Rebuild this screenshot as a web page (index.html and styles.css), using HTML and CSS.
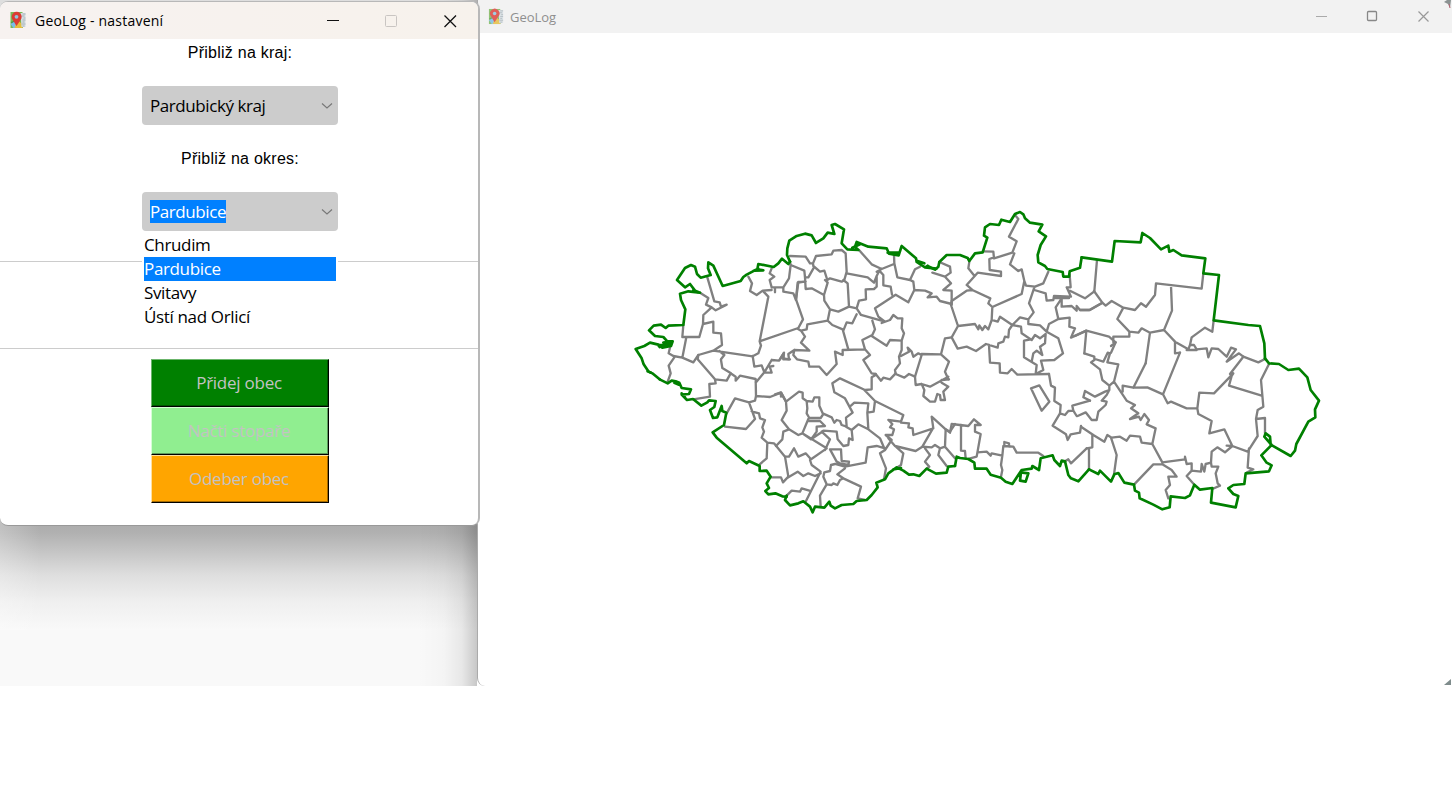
FILE: index.html
```html
<!DOCTYPE html>
<html lang="cs">
<head>
<meta charset="utf-8">
<title>GeoLog</title>
<link rel="stylesheet" href="styles.css">
</head>
<body>
<svg class="defs" aria-hidden="true">
  <symbol id="logo" viewBox="0 0 17 18">
    <rect x="1" y="1" width="12" height="16" fill="#78b957"/>
    <path d="M1 11l6-2 6 3v5H7z" fill="#4b9647"/>
    <path d="M1 13l5-3 2 7H4z" fill="#78bde8"/>
    <path d="M5 17l3-8 5 4v4z" fill="#e5bd3c"/>
    <path d="M11 2h5v14h-4z" fill="#d5dde2"/>
    <path d="M13 3h3M12 5h3M14 7h2M13 9h3M13 11h2M12 13h4M13 15h2" stroke="#a9b4bb" fill="none"/>
    <path d="M7 15L3.300 9A5 5 0 1 1 11 9z" fill="#dc3b34"/>
    <circle cx="7" cy="5.800" r="1.900" fill="#8fc4dd"/>
  </symbol>
</svg>
<div class="desktop">
  <div class="backdrop">
    <div class="shadow"></div>
    <section class="settings">
      <header class="titlebar">
        <svg class="logo"><use href="#logo"/></svg>
        <span class="title">GeoLog - nastavení</span>
        <svg class="controls" width="130" height="20" viewBox="0 0 130 20">
          <path d="M0 10.500h12" stroke="#111"/>
          <rect x="58.500" y="5.500" width="11" height="11" rx="1" stroke="#c9c5c2"/>
          <path d="M117.500 5.500l11.500 11.500m0-11.500l-11.500 11.500" stroke="#111" stroke-width="1.300"/>
        </svg>
      </header>
      <div class="form">
        <label class="label">Přibliž na kraj:</label>
        <div class="select"><span>Pardubický kraj</span><svg class="chev" width="12" height="8"><path d="M1 1.500l5 4.500 5-4.500"/></svg></div>
        <label class="label">Přibliž na okres:</label>
        <div class="select">
          <span class="marked">Pardubice</span><svg class="chev" width="12" height="8"><path d="M1 1.500l5 4.500 5-4.500"/></svg>
          <ul class="menu">
            <li>Chrudim</li><li class="active">Pardubice</li><li>Svitavy</li><li>Ústí nad Orlicí</li>
          </ul>
        </div>
      </div>
      <div class="band"></div>
      <div class="actions">
        <button class="btn add">Přidej obec</button>
        <button class="btn load">Načti stopaře</button>
        <button class="btn remove">Odeber obec</button>
      </div>
    </section>
  </div>
  <section class="main">
    <header class="titlebar inactive">
      <svg class="logo"><use href="#logo"/></svg>
      <span class="title">GeoLog</span>
      <svg class="controls" width="115" height="20" viewBox="0 0 115 20">
        <path d="M0 9.500h11" stroke="#aaa"/>
        <rect x="51.500" y="4.500" width="9" height="9" rx="1" stroke="#888" stroke-width="1.300"/>
        <path d="M102.500 4.500l10 10m0-10l-10 10" stroke="#999" stroke-width="1.200"/>
      </svg>
      <svg class="edge" width="8" height="8"><path d="M0 2l3-2h4l-1 8-2-4z" fill="#8b9292"/><path d="M5 4l1 4" stroke="#b66674"/></svg>
    </header>
    <svg class="map" width="975" height="653" viewBox="477 33 975 653">
      <g transform="translate(625 200) scale(.33333)">
        <g class="area">
          <path d="M370 230L381 250 375 273 395 285 413 272 440 270M440 205L434 220 448 230 434 240 440 262 475 262 492 235 497 195 495 185M450 262V277M413 272L430 290 404 424 520 384 534 358 513 298 518 248 540 245M475 262V275L505 280 513 300M404 424L408 437 400 460 383 469 265 452 220 465 205 487 172 473 145 468 131 460 136 438M247 232L268 304 284 307 288 320 305 314 272 331 260 322 243 314 250 294 225 278M260 322L235 345 234 372 223 411 172 411 175 375M184 412L172 473M234 372L265 365V398L288 400 291 435 265 452M283 453L298 465 288 478"/>
          <g transform="translate(450 0)"><path d="M45 168L92 170 105 190 114 190 123 168 170 163 175 152 200 150 212 160 215 215 208 240 200 245 165 235 157 240 148 212 135 215 115 198 114 190M117 202L100 232 90 232 88 212 47 195M90 232L92 267 110 265 147 285 158 248 150 240M92 245L70 246 63 300M147 285L148 302 165 328 190 335 222 320 245 325 258 345 330 365 310 350 300 325 362 284 400 307 418 270 415 245 405 240 367 232 358 190 357 165M205 240L218 250 222 320M215 220L278 232 297 248 305 228 313 212 325 225 325 256 347 260 351 284M305 228V260L297 267 272 268 273 298 252 302 245 325M252 150L290 193 320 207 357 192M320 207L305 215M405 240L420 208 435 200M418 270L450 272 470 280 458 292 485 290 495 303 530 312 530 272 505 270 528 250 510 230 472 218M493 186L525 200 527 218 510 230M165 328L158 362 97 373 95 388 78 392 90 410 78 428 103 452 58 450 55 465 66 478 100 485 103 500 133 500 155 525 185 492 180 455 203 465 203 450 270 448 262 420 292 405 300 388 292 362M158 362L172 375 203 388 220 448M205 392L215 367 232 370 245 343M320 369L345 360 355 345 368 355 382 355 380 385 387 400 380 422 345 420 335 437 290 408M380 422V450L372 470 375 490 360 510 362 522 388 533 402 522 420 530 440 465 430 460 415 470 410 455 398 443 402 455 378 468M270 448L285 465 265 480 290 520 302 522M440 462L498 463 510 415 530 412M498 463L522 485 510 515 520 538M58 450L40 462 42 478 25 475 27 458 15 478M78 392L68 386"/></g>
          <g transform="translate(900 0)"><path d="M270 45L280 57 252 110 275 124 262 158 207 175 205 155 173 154M207 172L193 177 194 210 228 215 228 228 158 218 125 255 142 270 196 295 190 310 202 321 290 282 298 243 290 208 280 213 255 193 268 160M133 185L130 205 148 227M298 243L303 257 330 260 355 250 370 215M328 262L312 310 326 337 310 358V372M310 358L285 352 262 375 225 350 218 365 200 360 202 321M142 270L125 272 80 303 78 315 99 378 150 372 160 388 163 376 172 390 180 378 190 388 200 360M99 378L80 412 98 446 125 440 153 453 183 432 218 443 220 430 235 425 240 410 250 412 252 390 262 375M192 435L195 488 224 490 225 518 248 520 260 507 277 524 372 522M262 375L288 380 290 400 320 420 330 405 345 415 362 402 360 430 345 440 352 465 335 452 325 460 320 485M318 418L297 422V472L335 495 332 522M310 372L345 376 365 395 400 415 414 460 388 480 348 482 355 510 332 522M365 395L372 372 400 357 434 353 433 380 450 385 438 413 484 392M328 270L362 280 365 302 385 300 387 288 438 290 425 262 437 262 434 225M400 357L392 322 410 295 400 290M410 295V320L440 318 455 332 455 318 465 330 495 330 530 310M435 272L480 295 508 274 516 180M80 303V315M388 294H432"/></g>
          <g transform="translate(1350 60)"><path d="M34 332L102 350 122 367 108 378M34 332L0 348M34 332L28 400M115 367V350H163V335L127 297 145 263 110 243 92 257 82 248 57 213M82 248L43 270 15 270M145 263L180 270 198 250 213 260 240 225 243 190 380 206 385 160M288 197L291 272 267 330 225 338 200 325 190 338 163 335M225 338L212 430M267 330L300 365V400L315 398M300 365L340 388 345 375H357L365 388 395 385 400 412 410 385 430 387 455 410 468 383 483 388 455 425 492 400 505 410 550 427 570 417M345 375L350 352 390 323 412 335 416 301M335 390H365"/></g>
          <g transform="translate(0 420)"><path d="M220 45L218 58 270 118 305 122 317 100 332 110V122L345 107 392 117 393 168 390 182 372 187 330 175 305 220M392 128L418 97 440 60M383 48L388 80 410 76 418 97 440 98 434 80 445 78M440 60L462 62 476 40 475 58 495 58M288 60L292 84 318 100M270 118L272 130 253 132 255 170 205 178M148 52L131 77 137 100 128 125M393 168L435 171 468 158 483 185M468 158V170M372 187L390 237 363 267 300 260M380 214L402 220 405 235 420 240 412 262 417 275 410 293 427 308 425 355 404 373M427 308L447 310 480 350 490 410 474 427 468 412 437 412"/></g>
          <g transform="translate(450 420)"><path d="M302 102L318 122 325 113 345 118 362 100M302 105L290 112V148L270 150 195 115 172 130 178 157 210 175 233 218 213 233 215 260 200 255 195 243 185 240 178 248 170 232 143 220 133 197V172H118L113 185 95 183 97 205 95 220 103 234H137L145 222M0 163L18 157 33 185 72 155 83 158V175L95 183M33 185L35 212 20 240 42 268 70 285 82 280 100 237M100 243H135L150 258 125 260V275L108 298 82 280M108 298L135 280 145 272 185 275 188 298 205 318 220 315 222 295 233 300 230 270 213 260M140 275L165 298 150 330M82 280L155 325M230 270L250 253 280 268 277 218 280 190 238 188 228 197M277 218L296 215 300 183 268 150M300 183L385 225 378 245 340 240 352 252 345 262 357 268 352 285 332 285 350 300 330 330 315 295 280 268M378 248L402 250 400 262 413 265 415 285 475 265 470 230 512 268 525 275 540 252M472 268L442 320 422 333 360 318 340 295M442 320L470 322 480 315 495 325 510 320 512 268M510 320L540 355M495 325L490 345 515 378M450 325L465 345 450 365 463 380 455 386M360 318L385 340 378 375 368 382M330 330L315 340 333 385 327 418M330 325L305 318 278 322 272 368 210 380 180 372 168 375 165 393 148 397 145 410 155 433 170 435 175 430 187 435 195 420 205 415 187 403 210 385M165 328H198L200 363 222 365 220 375 195 370 185 365ZM205 415L258 440 248 475 270 480M155 433L135 467 137 500M155 325L105 360 110 375 137 395 93 483M108 358L92 340 70 350 57 325 42 350 30 350M137 400L120 408 100 400 85 408 68 395 40 412M103 452L80 445 75 455 50 452 35 467M42 268L25 275 22 298 3 318M420 110L422 135 440 132 465 140 520 110M440 132L448 150 445 168 465 185 480 185 487 162 495 165 497 180 510 180 505 155 520 140 500 128M500 120L522 118"/></g>
          <g transform="translate(900 420)"><path d="M372 102L378 137 390 143 388 183 407 195 405 220 383 257 423 283 428 300 437 283 465 278 468 258M318 145L343 136 373 185 350 212ZM405 220L420 225 430 213 445 212 442 197 495 182M445 212L455 228M75 278L80 252 130 258 147 238 167 255 150 255V275L167 282 155 350 130 357M108 255V332L120 333 122 355M62 268L75 278M158 337L185 335 197 347 200 340 232 347 228 375 232 390 228 410M232 347L235 318 265 320 275 338H340L355 348M238 318V306L252 310V320M420 364L430 358 438 370 485 325"/></g>
          <g transform="translate(1350 420)"><path d="M28 40L58 50V60L48 67 75 88 82 120 103 137 117 125 130 73 97 67 105 40 98 38 85 65 60 57M117 125L155 182 180 195 168 205 190 220 165 237 192 230 197 240 208 222 222 240 215 253 242 265 232 312 262 367 330 358V350L335 372 350 370V392L378 395 380 372 388 395 392 372 408 368 410 335 427 322 450 337 472 318 448 268 403 280 410 243 370 222 367 205H335L288 185 278 190 264 163 217 142 175 143 143 137V155M108 38L122 7M212 70L175 143M315 38L264 163M367 205L373 158 417 160 475 100 470 108 462 137 560 167M465 102L505 50M582 72L558 120 565 200 548 210 543 237 570 234V280M543 237L548 288 518 335 472 318 455 317M522 325L518 383 535 388 515 398M408 368L410 380H430L422 400 428 430 435 437 412 447M350 392L335 408 358 434M177 434L235 373H262L290 390 305 410H280L285 435 272 450 280 475M232 312L200 308 195 290 165 287 155 302 135 290 110 293 97 285 88 305 55 285 18 260M52 285V322L35 325M42 325V388M108 293L125 345 117 403M45 182L25 172 30 153 60 170 90 155 103 150 95 165 80 182 95 185 92 195 70 215 65 240H50L32 217 8 228M103 137V150"/></g>
        </g>
        <g class="border">
          <path d="M495 185L490 192 471 176 460 190 446 201 400 192 397 208 415 211 388 212 365 224 355 231 347 243 293 258 265 197 250 187 249 205 257 225 227 233 216 222 210 200 198 195 180 204 156 240 180 262 195 252 214 277 225 278 190 274 165 281 168 300 181 328 175 375 130 377 122 384 108 374 86 377 72 391 90 408 115 411 127 424 143 424 138 438 112 443 100 434 75 428 58 438 32 447 50 475 56 493 70 514 82 520 104 538M115 428L143 424M385 213L400 206M104 441L100 434M205 270L225 278M100 436L136 432"/>
          <g transform="translate(0 420)"><path d="M104 118L128 130 140 122 152 124 163 128 170 144 198 148 192 162 170 164 186 180 204 177 229 197 247 187 252 181 272 183 268 201 255 210 264 234 277 232 290 198 292 213 304 218 297 255 263 277 275 293 365 370 372 363 404 378V393L425 392 437 410 425 430 432 444 421 453 430 463 451 460 472 469 485 470M148 128L162 134M170 160L180 172M68 94L78 98"/></g>
          <g transform="translate(450 420)"><path d="M35 467L30 480 45 496 70 490 85 484 105 500 113 517 120 500 148 503 163 485 167 497 180 505 200 495 235 492 245 483 275 480 290 465 308 442 304 428 330 418 340 400 365 382 385 392 402 404 415 403 433 408 455 386 483 401 515 398 520 380 540 378M355 388L378 384"/></g>
          <g transform="translate(900 420)"><path d="M90 378L95 350 105 354 130 357 148 368 150 386H185L197 404 228 413 242 425 262 432 290 390 320 386 322 378 342 390 347 355 383 346 388 360 405 378 410 362 420 364 430 405 438 415 460 424 492 388M288 397L285 422 302 425 310 400Z"/></g>
          <g transform="translate(1350 420)"><path d="M42 388L70 402 75 392 108 425 118 403 130 399 148 428 177 434 180 452 192 458 194 475 235 494 262 508 284 502 287 469 330 474 345 466 358 434 375 449 412 444 408 488 482 502 490 468 475 462 460 445 475 435 508 432 512 400 582 394 590 376 575 368 559 346 590 315 568 290 572 280 585 290 587 314 647 348 660 332 664 312 700 245 721 232 720 208 732 182 707 150 697 112 672 86 640 90 612 72 582 70 570 55"/></g>
          <g transform="translate(1350 60)"><path d="M570 415L568 370 555 318 520 315 416 301 432 165 385 160 391 115 320 106 295 90 283 95 280 77 258 88 225 54 202 39 197 67 119 63 111 125 20 112"/></g>
          <g transform="translate(900 0)"><path d="M470 172L465 203 434 214 432 230H415L413 216 367 207 360 198 340 187 338 165 347 135 363 109 341 94 352 74 315 68 300 55 295 43 285 36 270 42 255 66 229 59 222 75 195 72 180 82 177 107 187 113 173 157 150 160 133 183 128 174 105 165 65 165 43 186 40 200 30 209 8 198"/></g>
          <g transform="translate(450 0)"><path d="M458 198L450 202 425 186 423 175 380 138 371 166 342 161 335 145 280 140 245 126 240 140 250 150 217 148 200 130 207 88 180 72 170 75 178 102 158 98 145 115 123 129 110 106 90 101 65 108 43 122 37 145 36 165 45 185M232 143L255 133M338 158L372 158M425 182L448 190M450 202L484 206"/></g>
        </g>
      </g>
    </svg>
    <svg class="grip" width="8" height="8"><path d="M7 1v6H0z" fill="#7f8c8c"/></svg>
  </section>
</div>
</body>
</html>
```
FILE: styles.css
```css
* { box-sizing: border-box; }
body { margin: 0; background: #fff; font-family: "Open Sans", "Noto Sans", sans-serif; color: #000; }
.defs { position: absolute; width: 0; height: 0; }
.desktop { display: grid; grid-template-columns: 477px 975px; height: 686px; }
.backdrop { position: relative; padding-top: 1px; background: linear-gradient(#dedede 8px, #f9f9f9 8px); }
.backdrop::after { content: ""; position: absolute; top: 0; right: 0; bottom: 0; width: 60px; background: linear-gradient(90deg, rgba(0,0,0,0), rgba(0,0,0,.02) 45%, rgba(0,0,0,.07) 75%, rgba(0,0,0,.2)); }
.shadow { position: absolute; left: 0; right: 0; top: 515px; height: 115px; background: linear-gradient(#a9a9a9, #b0b0b0 15%, #c5c5c5 32%, #dedede 52%, #efefef 75%, #f9f9f9); }
.shadow::after { content: ""; position: absolute; inset: 0 auto 0 0; width: 40px; background: linear-gradient(90deg, rgba(255,255,255,.25), rgba(255,255,255,0)); }
.settings { position: relative; z-index: 2; display: flex; flex-direction: column; width: 480px; height: 525px; background: #fff; border: solid #b8b8b8; border-width: 1px 2px 1px 0; border-bottom-color: #999; border-radius: 8px; }
.titlebar { display: flex; align-items: center; flex: none; }
.settings .titlebar { height: 37px; padding: 0 21px 1px 9px; background: linear-gradient(90deg, #f7f2f0, #f7f2ec); border-radius: 7px 7px 0 0; }
.logo { flex: none; width: 18px; height: 18px; margin-right: 8px; }
.title { font-size: 14px; letter-spacing: .22px; white-space: nowrap; }
.controls { margin-left: auto; fill: none; }
.form { display: flex; flex-direction: column; align-items: center; height: 222px; width: 480px; }
.label { font: 16px/20px "Liberation Sans", Arial, sans-serif; letter-spacing: .24px; margin: 4px 0 23px; }
.select { position: relative; display: flex; align-items: center; justify-content: space-between; flex: none; width: 196px; height: 39px; padding: 0 5px 0 8px; border-radius: 4px; background: #ccc; font-size: 17px; letter-spacing: -.42px; line-height: 23px; }
.select + .label { margin-top: 24px; margin-bottom: 23px; }
.marked { background: #0080ff; color: #fff; }
.chev { fill: none; stroke: #777; stroke-width: 1.1; }
.menu { position: absolute; z-index: 3; left: 0; top: 39px; width: 196px; height: 100px; margin: 0; padding: 2px; list-style: none; background: #fff; letter-spacing: -.35px; line-height: 24px; }
.menu .active { background: #0080ff; color: #fff; }
.band { height: 88px; border: solid #ccc; border-width: 1px 0; }
.actions { display: flex; flex-direction: column; width: 178px; margin: 10px 0 0 151px; }
.btn { height: 48px; padding: 0 2px 2px 0; border: 1px solid #000; color: #c3c3c3; font: 17px "Open Sans", sans-serif; letter-spacing: -.25px; }
.add { background: green; border-top-color: #6bb56b; border-left-color: #6bb56b; box-shadow: inset -1px -1px #005500; }
.load { background: #90ee90; border-top-color: #d5ffd5; border-left-color: #d5ffd5; box-shadow: inset -1px -1px #5d9a5d; }
.remove { background: orange; border-top-color: #ffe0a0; border-left-color: #ffe0a0; box-shadow: inset -1px -1px #a66b00; }
.main { position: relative; z-index: 1; display: flex; flex-direction: column; background: #fff; border-left: 1px solid #aaa; border-radius: 0 0 0 8px; }
.inactive { height: 33px; padding: 0 21px 0 10px; background: #f2f2f2; color: #8f8f8f; }
.inactive .title { font-size: 13px; letter-spacing: -.05px; }
.inactive .logo { width: 16px; height: 17px; margin-right: 6px; opacity: .8; }
.edge { position: absolute; top: 0; right: 0; }
.grip { position: absolute; right: 0; bottom: 0; }
.map { display: block; margin-left: -1px; }
.map path { fill: none; stroke-linejoin: round; stroke-linecap: round; }
.area { stroke: #808080; stroke-width: 7; }
.border { stroke: #008000; stroke-width: 8; }
```
